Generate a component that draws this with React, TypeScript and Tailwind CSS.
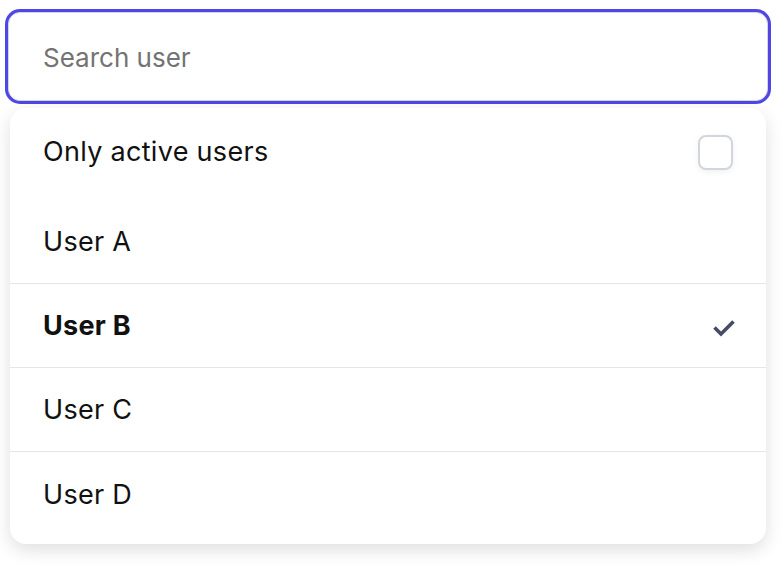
import React, { useState } from "react";

const users = ["User A", "User B", "User C", "User D"];

const CheckIcon = () => (
  <svg width="24" height="24" viewBox="0 0 24 24" fill="none">
    <path
      d="M2.5 12.5 L9 19 L21.5 6.5"
      stroke="#474b63"
      strokeWidth="3.6"
      strokeLinejoin="miter"
    />
  </svg>
);

const App = () => {
  const [selected] = useState("User B");
  const [onlyActive, setOnlyActive] = useState(false);

  return (
    <div className="w-[784px] h-[568px] bg-white font-['Inter',sans-serif] text-[27px] tracking-[0.3px] text-[#111]">
      <div className="pt-[12px] pl-[8px] pr-[16px]">
        <input
          placeholder="Search user"
          className="block w-full h-[89px] rounded-[12px] border border-gray-300 ring-[3px] ring-[#4f46e5] px-[34px] pt-[1px] outline-none text-[26px] tracking-normal placeholder:text-[#737373] bg-white"
        />
      </div>
      <div className="ml-[10px] mr-[18px] mt-[7px] bg-white rounded-[16px] shadow-[0_6px_18px_rgba(0,0,0,0.13)] pb-[8px]">
        <div className="h-[92px] pb-[4px] px-[33px] flex items-center justify-between">
          <span>Only active users</span>
          <button
            onClick={() => setOnlyActive(!onlyActive)}
            className="w-[35px] h-[35px] rounded-[8px] border-2 border-gray-300 bg-white shadow-[0_2px_6px_rgba(0,0,0,0.06)]"
          />
        </div>
        {users.map((u, i) => (
          <div
            key={u}
            className={
              "h-[84px] px-[33px] pr-[30px] pt-[2px] flex items-center justify-between " +
              (i < users.length - 1 ? "border-b border-[#e5e5e5]" : "")
            }
          >
            <span className={u === selected ? "font-bold" : ""}>{u}</span>
            {u === selected && <CheckIcon />}
          </div>
        ))}
      </div>
    </div>
  );
};

export default App;
